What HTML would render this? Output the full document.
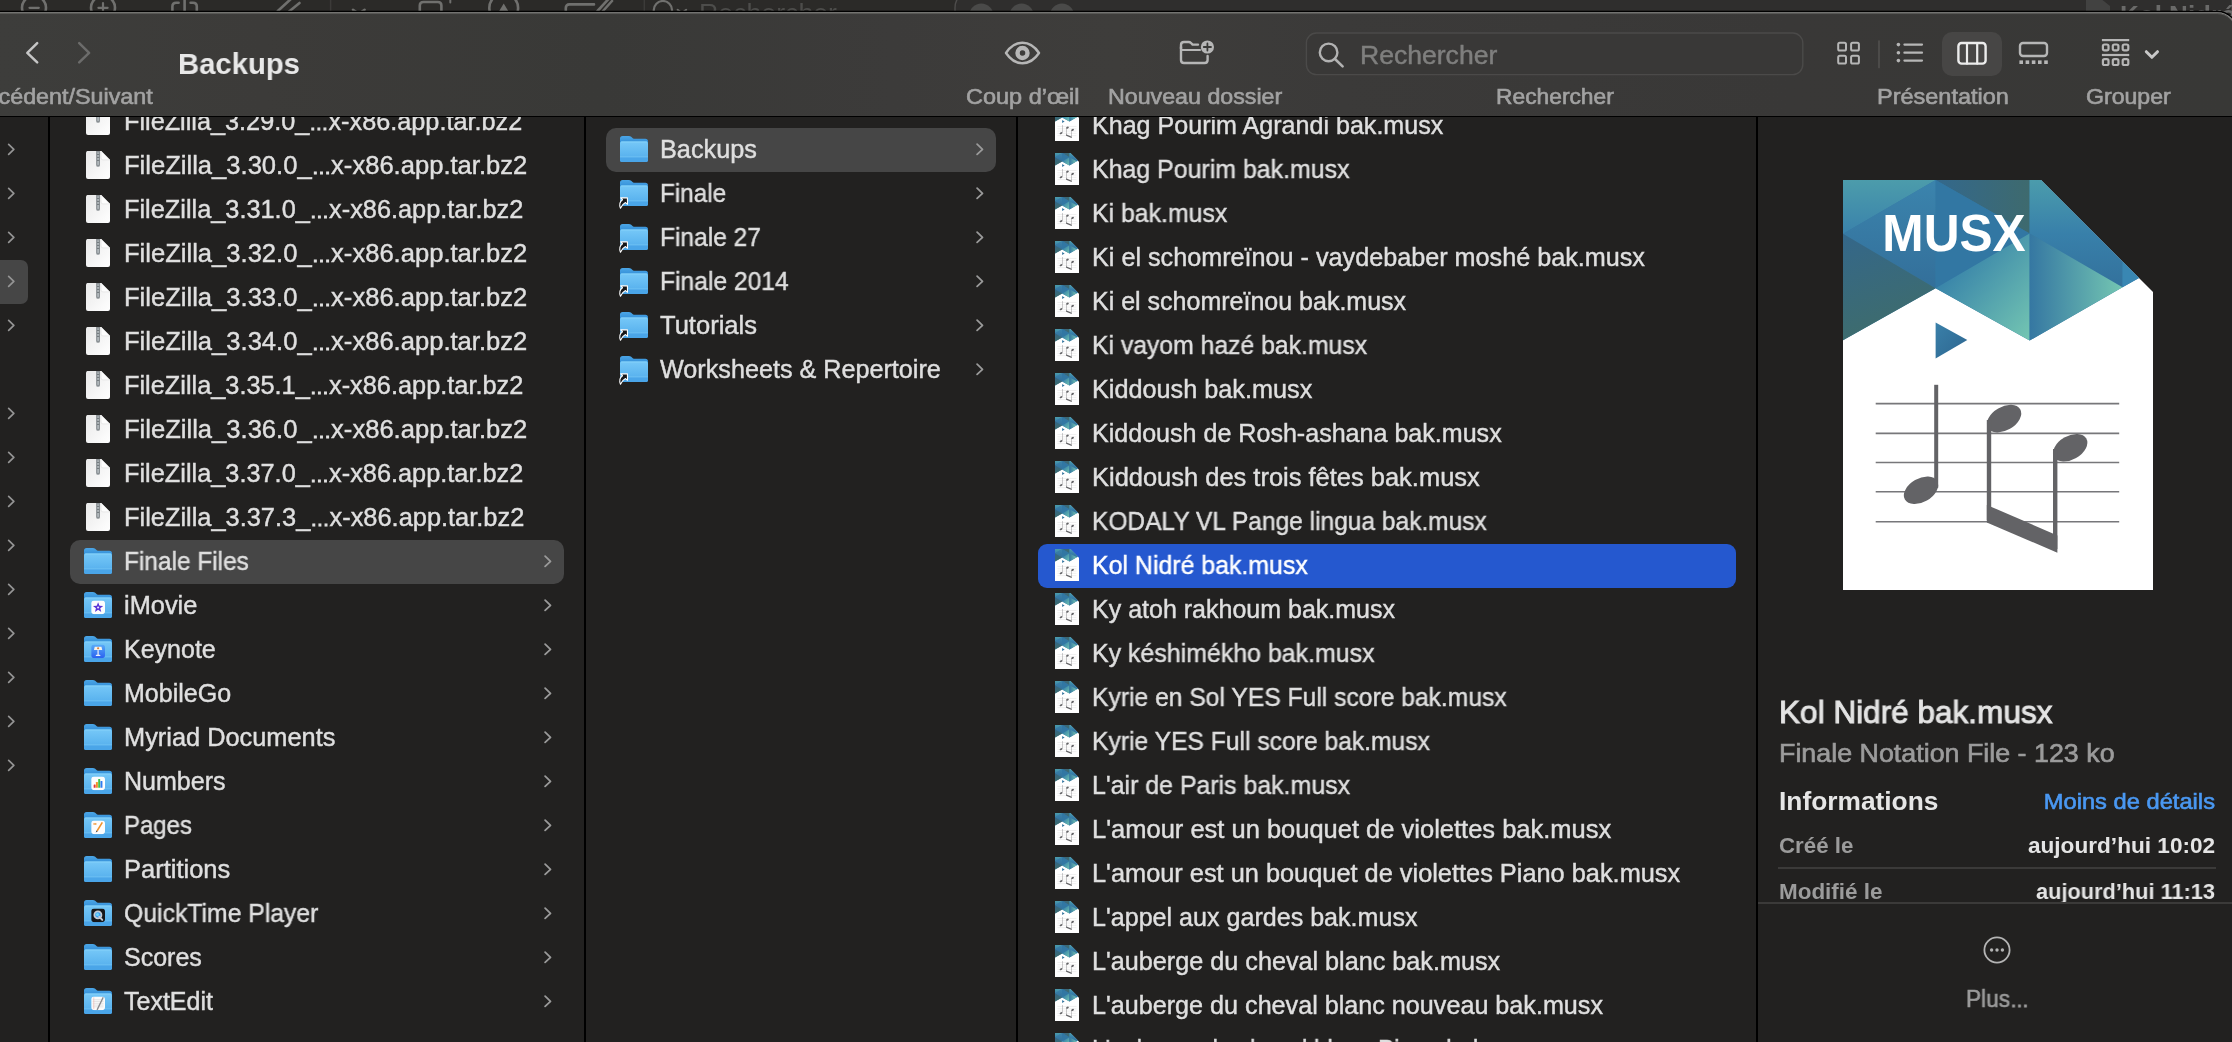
<!DOCTYPE html>
<html lang="fr">
<head>
<meta charset="utf-8">
<title>Backups</title>
<style>
html,body{margin:0;padding:0}
body{width:2232px;height:1042px;overflow:hidden;background:#222120;position:relative;font-family:"Liberation Sans",sans-serif}
.a{position:absolute;display:block}
.z{z-index:5}
.t.s{-webkit-text-stroke:.62px currentColor}
.t.s2{-webkit-text-stroke:.95px currentColor}
.t{-webkit-text-stroke:.45px currentColor;will-change:transform;position:absolute;white-space:nowrap;line-height:44px;height:44px}

.e{font-size:19px;-webkit-text-stroke:1.05px currentColor}
#strip{left:0;top:0;width:2232px;height:40px;background:#2b2a28;overflow:hidden;z-index:4}
#tb{left:0;top:14px;width:2232px;height:102px;background:#3a3a38}
</style>
</head>
<body>
<svg width="0" height="0" style="position:absolute">
<defs>
<linearGradient id="gfb" x1="0" y1="0" x2="0" y2="1"><stop offset="0" stop-color="#4ca6e6"/><stop offset="0.22" stop-color="#3792da"/><stop offset="1" stop-color="#3792da"/></linearGradient>
<linearGradient id="gff" x1="0" y1="0" x2="0" y2="1"><stop offset="0" stop-color="#76c8f7"/><stop offset="0.78" stop-color="#58b1ee"/><stop offset="1" stop-color="#54adec"/></linearGradient>
<linearGradient id="gzip" x1="0" y1="0" x2="1" y2="1"><stop offset="0" stop-color="#e9e9e9"/><stop offset="1" stop-color="#ffffff"/></linearGradient>
<linearGradient id="m1" x1="0" y1="0" x2="0" y2="1"><stop offset="0" stop-color="#4c9cab"/><stop offset="1" stop-color="#3a82ab"/></linearGradient>
<linearGradient id="m2" x1="0" y1="0" x2="0" y2="1"><stop offset="0" stop-color="#3b84ad"/><stop offset="1" stop-color="#336f9a"/></linearGradient>
<linearGradient id="m3" x1="0" y1="0" x2="0.3" y2="1"><stop offset="0" stop-color="#34678a"/><stop offset="1" stop-color="#3e6c6c"/></linearGradient>
<linearGradient id="m4" x1="0" y1="0" x2="1" y2="0"><stop offset="0" stop-color="#33688c"/><stop offset="1" stop-color="#3e6a6e"/></linearGradient>
<linearGradient id="m6" x1="0.2" y1="0.2" x2="1" y2="1"><stop offset="0" stop-color="#3580a9"/><stop offset="1" stop-color="#74c6b2"/></linearGradient>
<linearGradient id="m7" x1="0" y1="0" x2="0" y2="1"><stop offset="0" stop-color="#4b9cac"/><stop offset="0.5" stop-color="#3880aa"/><stop offset="1" stop-color="#33719c"/></linearGradient>
<linearGradient id="m8" x1="0" y1="0" x2="1" y2="0"><stop offset="0" stop-color="#3577a2"/><stop offset="1" stop-color="#74c6b2"/></linearGradient>
<linearGradient id="m9" x1="0" y1="0" x2="1" y2="1"><stop offset="0" stop-color="#3a80a9"/><stop offset="1" stop-color="#2d6690"/></linearGradient>

<linearGradient id="gkn" x1="0" y1="0" x2="0" y2="1"><stop offset="0" stop-color="#58acf8"/><stop offset="1" stop-color="#2a60f0"/></linearGradient>
<symbol id="folder" viewBox="0 0 28 27">
<path d="M0 3 Q0 0.3 2.6 0.3 L8.8 0.3 Q10.2 0.3 11.2 1.2 L12.8 2.6 Q13.6 3.2 15 3.2 L25.4 3.2 Q28 3.2 28 5.8 L28 24 Q28 26.5 25.4 26.5 L2.6 26.5 Q0 26.5 0 24 Z" fill="url(#gfb)"/>
<path d="M0 7.6 Q0 5.9 1.8 5.9 L26.2 5.9 Q28 5.9 28 7.6 L28 24 Q28 26.5 25.4 26.5 L2.6 26.5 Q0 26.5 0 24 Z" fill="url(#gff)"/>
<path d="M0 21.6 L28 21.6 L28 24 Q28 26.5 25.4 26.5 L2.6 26.5 Q0 26.5 0 24 Z" fill="#4aa5e8"/>
<rect x="0" y="20.8" width="28" height="0.9" fill="#70c2f4"/>
<rect x="0.8" y="5.9" width="26.4" height="0.9" rx="0.4" fill="#86d2fa"/>
</symbol>

<symbol id="zip" viewBox="0 0 24 28">
<path d="M2 0 L15 0 L24 9 L24 26 Q24 28 22 28 L2 28 Q0 28 0 26 L0 2 Q0 0 2 0 Z" fill="url(#gzip)"/>
<path d="M15 0 L24 9 L17 9 Q15 9 15 7 Z" fill="#fdfdfd" stroke="#dcdcdc" stroke-width="0.6"/>
<path d="M10.1 0 L14 0 L14 14 Q14 15.9 12 15.9 Q10.1 15.9 10.1 14 Z" fill="#8a9094"/>
<rect x="11.4" y="1.5" width="1.4" height="12.5" fill="#b9c0c4"/>
<rect x="11" y="3" width="2.2" height="1" fill="#6f767a"/><rect x="11" y="6" width="2.2" height="1" fill="#6f767a"/><rect x="11" y="9" width="2.2" height="1" fill="#6f767a"/>
</symbol>

<symbol id="musx" viewBox="0 0 310 410">
<path d="M0 0 L198 0 L310 112 L310 410 L0 410 Z" fill="#ffffff"/>
<path d="M0 0 L198 0 L296 98 L279.5 107.2 L186.6 160.6 L92.6 108.3 L0 160.3 Z" fill="#3579a3"/>
<path d="M0 0 L92.6 0 L0 53.7 Z" fill="url(#m1)"/>
<path d="M92.6 0 L92.6 108.3 L0 53.7 Z" fill="url(#m2)"/>
<path d="M0 53.7 L92.6 108.3 L0 160.3 Z" fill="url(#m3)"/>
<path d="M92.6 0 L186.6 0 L186.6 53.4 Z" fill="url(#m4)"/>
<path d="M92.6 0 L186.6 53.4 L92.6 108.3 Z" fill="#3277a3"/>
<path d="M92.6 108.3 L186.6 53.4 L186.6 160.6 Z" fill="url(#m6)"/>
<path d="M186.6 0 L198 0 L279.5 81.5 L279.5 107.2 L186.6 53.4 Z" fill="url(#m7)"/>
<path d="M186.6 53.4 L279.5 107.2 L186.6 160.6 Z" fill="url(#m8)"/>
<path d="M279.5 81.5 L296 98 L279.5 107.2 Z" fill="#3987b3"/>
<path d="M92.6 142.5 L124.3 160 L92.6 178.4 Z" fill="url(#m9)"/>
<g stroke="#77777a" stroke-width="1.6">
<line x1="32.7" y1="223.6" x2="276.2" y2="223.6"/><line x1="32.7" y1="253.4" x2="276.2" y2="253.4"/><line x1="32.7" y1="282.5" x2="276.2" y2="282.5"/><line x1="32.7" y1="311.7" x2="276.2" y2="311.7"/><line x1="32.7" y1="341.7" x2="276.2" y2="341.7"/>
</g>
<g fill="#636366">
<ellipse cx="78" cy="310.3" rx="18.6" ry="11.8" transform="rotate(-30 78 310.3)"/>
<rect x="91.2" y="204.8" width="4" height="103"/>
<ellipse cx="161.1" cy="238.6" rx="18.6" ry="11.8" transform="rotate(-30 161.1 238.6)"/>
<rect x="143.8" y="240" width="4.4" height="100"/>
<ellipse cx="227.2" cy="267.8" rx="18.6" ry="11.8" transform="rotate(-30 227.2 267.8)"/>
<rect x="210" y="269" width="4.4" height="100"/>
<path d="M143.8 324.9 L214.4 355.4 L214.4 372.8 L143.8 342.4 Z"/>
</g>
</symbol>

<symbol id="alias" viewBox="0 0 14 14">
<path d="M5.2 1.2 L12.4 1.2 L12.4 8.4 L10 6.4 Q5.4 7.4 3 12.6 L1.2 12 Q2.2 6 7.4 3.6 Z" fill="#111" stroke="#fff" stroke-width="1.3" stroke-linejoin="round"/>
</symbol>

<symbol id="b-imovie" viewBox="0 0 14 14"><rect width="14" height="14" rx="3.2" fill="#fdfdfd"/><path d="M7 1.8 L8.4 5.4 L12.2 5.6 L9.2 8 L10.2 11.8 L7 9.6 L3.8 11.8 L4.8 8 L1.8 5.6 L5.6 5.4 Z" fill="#5a34d6"/><circle cx="7" cy="7.2" r="1.1" fill="#e9e2ff"/></symbol>
<symbol id="b-keynote" viewBox="0 0 14 14"><rect width="14" height="14" rx="3.2" fill="url(#gkn)"/><path d="M3.6 2.4 L10.4 2.4 L11.2 5.8 L2.8 5.8 Z" fill="#f6f3ea"/><circle cx="7" cy="3.9" r="1.1" fill="#e0803a"/><rect x="6.3" y="5.8" width="1.4" height="5" fill="#dfe6f6"/><rect x="4.6" y="10.6" width="4.8" height="1.1" rx="0.5" fill="#eef2fa"/></symbol>
<symbol id="b-numbers" viewBox="0 0 14 14"><rect width="14" height="14" rx="3.2" fill="#fdfdfd"/><rect x="2.5" y="8.2" width="2" height="3.4" rx=".4" fill="#e0353d"/><rect x="4.8" y="5.8" width="2" height="5.8" rx=".4" fill="#f0932a"/><rect x="7.1" y="2.6" width="2" height="9" rx=".4" fill="#3fc14b"/><rect x="9.4" y="4.6" width="2" height="7" rx=".4" fill="#2f7cf0"/></symbol>
<symbol id="b-pages" viewBox="0 0 14 14"><rect width="14" height="14" rx="3.2" fill="#fdfdfd"/><path d="M5.3 10.2 L10.6 1.6 L12 2.4 L6.7 11 Z" fill="#f0912a"/><path d="M5.3 10.2 L6.7 11 L4.6 12.4 Z" fill="#3a3a3a"/><rect x="2.4" y="2.6" width="1.1" height="2" fill="#f0912a"/><rect x="4.1" y="2.6" width="1.1" height="2" fill="#f0912a"/></symbol>
<symbol id="b-qt" viewBox="0 0 14 14"><rect width="14" height="14" rx="3.2" fill="#16171a"/><circle cx="6.8" cy="6.6" r="3.6" fill="#3aa0f4" stroke="#c3cad4" stroke-width="1.8"/><circle cx="6.4" cy="6.2" r="1.6" fill="#6fd4fa"/><path d="M8.2 8.4 L11.2 11.6" stroke="#c3cad4" stroke-width="2" stroke-linecap="round"/></symbol>
<symbol id="b-textedit" viewBox="0 0 14 14"><rect width="14" height="14" rx="3.2" fill="#fbfbfb"/><g stroke="#d4d4d4" stroke-width="0.6"><line x1="1.5" y1="3.4" x2="12.5" y2="3.4"/><line x1="1.5" y1="5.2" x2="12.5" y2="5.2"/><line x1="1.5" y1="7" x2="12.5" y2="7"/><line x1="1.5" y1="8.8" x2="12.5" y2="8.8"/><line x1="1.5" y1="10.6" x2="12.5" y2="10.6"/></g><line x1="2.6" y1="1" x2="2.6" y2="13" stroke="#f0b0a8" stroke-width="0.6"/><path d="M5.4 13.4 L11.6 0.6 L12.8 1.2 L6.6 14 Z" fill="#8a8a8e"/></symbol>
</defs>
</svg>

<!-- background window strip -->
<div class="a" id="strip">
<svg class="a" style="left:0;top:0;will-change:transform" width="2232" height="40" viewBox="0 0 2232 40">
<g fill="none" stroke="#70706e" stroke-width="2.6" stroke-linecap="round">
<circle cx="34" cy="7.8" r="12"/><line x1="29.5" y1="7.8" x2="38.8" y2="7.8" stroke-width="2.2"/>
<circle cx="103" cy="7.8" r="12"/><line x1="98.4" y1="7.8" x2="107.6" y2="7.8" stroke-width="2.2"/><line x1="103" y1="3" x2="103" y2="12" stroke-width="2.2"/>
<path d="M172.4 12 L172.4 6.6 Q172.4 2.8 176.2 2.8 L178.6 2.8 M190.6 2.8 L193 2.8 Q196.8 2.8 196.8 6.6 L196.8 12"/><line x1="184.6" y1="-2" x2="184.6" y2="12"/>
<path d="M277.8 11 L292 -2 M299.5 3 L288.5 12"/>
<path d="M353 9.8 L358.8 13.8 L364.6 9.8"/>
<path d="M419.8 12 L419.8 5.6 Q419.8 2 423.4 2 L437.8 2 Q441.4 2 441.4 5.6 L441.4 12"/><line x1="450.3" y1="-2" x2="450.3" y2="2.6" stroke-width="2"/>
<circle cx="503.7" cy="8" r="14.4"/><path d="M498.6 12 L503.7 3.6 L508.8 12 Z" fill="#70706e" stroke="none"/>
<path d="M565.8 12 L565.8 8 Q565.8 4.4 569.4 4.4 L594 4.4"/><path d="M597.5 11 L608.5 -1 M603 11 L612 1"/>
<circle cx="662.9" cy="10.2" r="9.2" stroke-width="2.2"/>
<path d="M677.6 9.8 L681.9 13 L686.2 9.8" stroke-width="2"/>
</g>
<line x1="330.6" y1="0" x2="330.6" y2="11" stroke="#3c3b39" stroke-width="1.5"/>
<line x1="644.3" y1="0" x2="644.3" y2="11" stroke="#3c3b39" stroke-width="1.5"/>
<text x="699" y="22.3" font-family='"Liberation Sans", sans-serif' font-size="26" fill="#4d4d4b" textLength="138" lengthAdjust="spacingAndGlyphs">Rechercher</text>
<path d="M955 12 L955 8 Q955 -6 972 -10 L2232 -10 L2232 12 Z" fill="#2f2e2d" stroke="#4e4d4c" stroke-width="1.4"/>
<circle cx="981.3" cy="15.6" r="12" fill="#4a4a49"/><circle cx="1021.6" cy="15.6" r="12" fill="#4a4a49"/><circle cx="1062" cy="15.6" r="12" fill="#4a4a49"/>
<path d="M2086 12 L2086 0 L2100 -2 L2110 6 L2110 12 Z" fill="#424241"/>
<text x="2120" y="24" font-family='"Liberation Sans", sans-serif' font-weight="bold" font-size="26" fill="#6a6a69">Kol Nidré bak.musx</text>
</svg>
</div>

<!-- toolbar -->
<svg class="a z" style="left:0;top:0" width="2232" height="118" viewBox="0 0 2232 118">
<defs><linearGradient id="gtb" x1="0" y1="0" x2="1" y2="0"><stop offset="0" stop-color="#3d3d3b"/><stop offset="0.12" stop-color="#3c3b39"/><stop offset="0.27" stop-color="#393937"/><stop offset="0.4" stop-color="#3c3b3a"/><stop offset="0.5" stop-color="#3e3d3b"/><stop offset="0.6" stop-color="#3b3a39"/><stop offset="0.8" stop-color="#393837"/><stop offset="1" stop-color="#383836"/></linearGradient></defs>
<path d="M-5 12 L2217.5 12 A19.5 19.5 0 0 1 2237 31.5 L2237 116 L-5 116 Z" fill="url(#gtb)"/>
<path d="M-5 11.5 L2217.5 11.5 A20 20 0 0 1 2237.5 31.5" fill="none" stroke="#000" stroke-width="1.3"/>
<path d="M-5 12.75 L2217.5 12.75 A18.75 18.75 0 0 1 2236.25 31.5" fill="none" stroke="#8a8a88" stroke-width="1.1"/>
<path d="M-5 13.6 L2217.5 13.6 A17.9 17.9 0 0 1 2235.4 31.5" fill="none" stroke="#5a5a58" stroke-width="0.9"/>
</svg>
<div class="a z" style="left:0;top:116px;width:2232px;height:1.4px;background:#000"></div>
<svg class="a z" style="left:0;top:14px" width="2232" height="102" viewBox="0 14 2232 102">
<g fill="none" stroke-linecap="round" stroke-linejoin="round">
<path d="M37.2 43.2 L27.3 52.8 L37.2 62.4" stroke="#c6c6c6" stroke-width="2.5"/>
<path d="M79.2 43.2 L89.1 52.8 L79.2 62.4" stroke="#6c6c6b" stroke-width="2.5"/>
<!-- eye -->
<path d="M1006 53 C1010.5 46.2 1016 42.8 1022.5 42.8 C1029 42.8 1034.5 46.2 1039 53 C1034.5 59.8 1029 63.2 1022.5 63.2 C1016 63.2 1010.5 59.8 1006 53 Z" stroke="#b6b6b6" stroke-width="2.4"/>
<circle cx="1022.5" cy="53" r="5" stroke="#b6b6b6" stroke-width="4.4"/>
<!-- new folder -->
<path d="M1181 47 L1181 60 Q1181 63 1184 63 L1204.6 63 Q1207.6 63 1207.6 60 L1207.6 56" stroke="#b6b6b6" stroke-width="2.4"/>
<path d="M1181 48.4 L1181 45 Q1181 42 1184 42 L1188.6 42 Q1190 42 1191 43 L1192.6 44.6 L1198 44.6" stroke="#b6b6b6" stroke-width="2.4"/>
<path d="M1181.6 50 L1200 50" stroke="#b6b6b6" stroke-width="2.2"/>
<circle cx="1207.4" cy="47" r="6.6" fill="#b6b6b6" stroke="none"/>
<path d="M1203.8 47 L1211 47 M1207.4 43.4 L1207.4 50.6" stroke="#3a3a38" stroke-width="1.8"/>
<!-- search field -->
<rect x="1306.4" y="33" width="496.4" height="41.6" rx="10" fill="#393837" stroke="#4b4a49" stroke-width="1.4"/>
<circle cx="1328.6" cy="52.4" r="8.8" stroke="#b2b2b2" stroke-width="2.4"/>
<path d="M1335 59 L1342.6 66.4" stroke="#b2b2b2" stroke-width="2.6"/>
<!-- view: grid -->
<g stroke="#b6b6b6" stroke-width="2">
<rect x="1838.2" y="42.8" width="7.8" height="7.8" rx="1.6"/><rect x="1851.1" y="42.8" width="7.8" height="7.8" rx="1.6"/>
<rect x="1838.2" y="55.7" width="7.8" height="7.8" rx="1.6"/><rect x="1851.1" y="55.7" width="7.8" height="7.8" rx="1.6"/>
</g>
<line x1="1879" y1="41" x2="1879" y2="67.6" stroke="#52514f" stroke-width="1.6"/>
<!-- list -->
<g stroke="#b6b6b6" stroke-width="2.2">
<line x1="1904.4" y1="44.6" x2="1922" y2="44.6"/><line x1="1904.4" y1="52.7" x2="1922" y2="52.7"/><line x1="1904.4" y1="60.6" x2="1922" y2="60.6"/>
</g>
<circle cx="1898.4" cy="44.6" r="1.8" fill="#b6b6b6"/><circle cx="1898.4" cy="52.7" r="1.8" fill="#b6b6b6"/><circle cx="1898.4" cy="60.6" r="1.8" fill="#b6b6b6"/>
<!-- columns selected -->
<rect x="1942" y="32" width="60" height="44" rx="10" fill="#474645"/>
<rect x="1958.4" y="43" width="27.2" height="20.6" rx="3.2" stroke="#ececec" stroke-width="2.4"/>
<line x1="1967" y1="43" x2="1967" y2="63.6" stroke="#ececec" stroke-width="2.2"/><line x1="1977.2" y1="43" x2="1977.2" y2="63.6" stroke="#ececec" stroke-width="2.2"/>
<!-- gallery -->
<rect x="2020" y="43" width="27" height="13" rx="3" stroke="#b6b6b6" stroke-width="2.4"/>
<g fill="#b6b6b6" stroke="none"><rect x="2019.4" y="60.4" width="3.6" height="3.6"/><rect x="2025.6" y="60.4" width="3.6" height="3.6"/><rect x="2031.8" y="60.4" width="3.6" height="3.6"/><rect x="2038" y="60.4" width="3.6" height="3.6"/><rect x="2044.2" y="60.4" width="3.6" height="3.6"/></g>
<!-- group -->
<g stroke="#b6b6b6" stroke-width="2.2">
<line x1="2101.9" y1="40.1" x2="2129.2" y2="40.1" stroke-linecap="butt"/><line x1="2101.9" y1="55" x2="2129.2" y2="55" stroke-linecap="butt"/>
<rect x="2102.9" y="44.5" width="5.6" height="5.9" rx="1.6"/><rect x="2112.8" y="44.5" width="5.6" height="5.9" rx="1.6"/><rect x="2122.7" y="44.5" width="5.6" height="5.9" rx="1.6"/>
<rect x="2102.9" y="59.1" width="5.6" height="5.9" rx="1.6"/><rect x="2112.8" y="59.1" width="5.6" height="5.9" rx="1.6"/><rect x="2122.7" y="59.1" width="5.6" height="5.9" rx="1.6"/>
</g>
<path d="M2146.3 51.7 L2151.9 57.3 L2157.5 51.7" stroke="#c8c8c8" stroke-width="3"/>
</g>
</svg>
<!--TBTEXT-->
<div class="t" id="tb_title" style="left:177.8px;transform-origin:0 50%;transform:scaleX(0.9756);top:41.9px;font-size:30px;color:#e8e8e8;font-weight:bold;z-index:6;-webkit-text-stroke:0;">Backups</div>
<div class="t s" id="tb_prev" style="right:2079px;transform-origin:100% 50%;transform:scaleX(1.0600);top:75.0px;font-size:22px;color:#a2a2a2;font-weight:normal;z-index:6;">Précédent/Suivant</div>
<div class="t s" id="tb_coup" style="left:965.6px;transform-origin:0 50%;transform:scaleX(1.0673);top:75.0px;font-size:22px;color:#a2a2a2;font-weight:normal;z-index:6;">Coup d’œil</div>
<div class="t s" id="tb_nouv" style="left:1107.6px;transform-origin:0 50%;transform:scaleX(1.0552);top:75.0px;font-size:22px;color:#a2a2a2;font-weight:normal;z-index:6;">Nouveau dossier</div>
<div class="t s" id="tb_rech" style="left:1495.7px;transform-origin:0 50%;transform:scaleX(1.0360);top:75.0px;font-size:22px;color:#a2a2a2;font-weight:normal;z-index:6;">Rechercher</div>
<div class="t s" id="tb_pres" style="left:1877.1px;transform-origin:0 50%;transform:scaleX(1.0670);top:75.0px;font-size:22px;color:#a2a2a2;font-weight:normal;z-index:6;">Présentation</div>
<div class="t s" id="tb_grou" style="left:2086.4px;transform-origin:0 50%;transform:scaleX(1.0503);top:75.0px;font-size:22px;color:#a2a2a2;font-weight:normal;z-index:6;">Grouper</div>
<div class="t" id="tb_ph" style="left:1360.2px;transform-origin:0 50%;transform:scaleX(1.0623);top:32.6px;font-size:25px;color:#7f7f7e;font-weight:normal;z-index:6;">Rechercher</div>
<div class="a" style="left:48px;top:116px;width:2px;height:930px;background:#000"></div>
<div class="a" style="left:584px;top:116px;width:2px;height:930px;background:#000"></div>
<div class="a" style="left:1016px;top:116px;width:2px;height:930px;background:#000"></div>
<div class="a" style="left:1756px;top:116px;width:2px;height:930px;background:#000"></div>
<div class="a" style="left:-10px;top:260px;width:38px;height:44px;border-radius:7px;background:#464646"></div>
<div class="a" style="left:70px;top:540px;width:494px;height:44px;border-radius:10px;background:#464646"></div>
<div class="t" id="c1_0" style="left:124.0px;transform-origin:0 50%;transform:scaleX(1.0101);top:99px;font-size:25px;color:#dfdfdf;font-weight:normal;">FileZilla_3.29.0_<span class=e>…</span>x-x86.app.tar.bz2</div>
<div class="t" id="c1_1" style="left:124.0px;transform-origin:0 50%;transform:scaleX(1.0229);top:143px;font-size:25px;color:#dfdfdf;font-weight:normal;">FileZilla_3.30.0_<span class=e>…</span>x-x86.app.tar.bz2</div>
<div class="t" id="c1_2" style="left:124.0px;transform-origin:0 50%;transform:scaleX(1.0129);top:187px;font-size:25px;color:#dfdfdf;font-weight:normal;">FileZilla_3.31.0_<span class=e>…</span>x-x86.app.tar.bz2</div>
<div class="t" id="c1_3" style="left:124.0px;transform-origin:0 50%;transform:scaleX(1.0229);top:231px;font-size:25px;color:#dfdfdf;font-weight:normal;">FileZilla_3.32.0_<span class=e>…</span>x-x86.app.tar.bz2</div>
<div class="t" id="c1_4" style="left:124.0px;transform-origin:0 50%;transform:scaleX(1.0229);top:275px;font-size:25px;color:#dfdfdf;font-weight:normal;">FileZilla_3.33.0_<span class=e>…</span>x-x86.app.tar.bz2</div>
<div class="t" id="c1_5" style="left:124.0px;transform-origin:0 50%;transform:scaleX(1.0229);top:319px;font-size:25px;color:#dfdfdf;font-weight:normal;">FileZilla_3.34.0_<span class=e>…</span>x-x86.app.tar.bz2</div>
<div class="t" id="c1_6" style="left:124.0px;transform-origin:0 50%;transform:scaleX(1.0128);top:363px;font-size:25px;color:#dfdfdf;font-weight:normal;">FileZilla_3.35.1_<span class=e>…</span>x-x86.app.tar.bz2</div>
<div class="t" id="c1_7" style="left:124.0px;transform-origin:0 50%;transform:scaleX(1.0229);top:407px;font-size:25px;color:#dfdfdf;font-weight:normal;">FileZilla_3.36.0_<span class=e>…</span>x-x86.app.tar.bz2</div>
<div class="t" id="c1_8" style="left:124.0px;transform-origin:0 50%;transform:scaleX(1.0129);top:451px;font-size:25px;color:#dfdfdf;font-weight:normal;">FileZilla_3.37.0_<span class=e>…</span>x-x86.app.tar.bz2</div>
<div class="t" id="c1_9" style="left:124.0px;transform-origin:0 50%;transform:scaleX(1.0153);top:495px;font-size:25px;color:#dfdfdf;font-weight:normal;">FileZilla_3.37.3_<span class=e>…</span>x-x86.app.tar.bz2</div>
<div class="t" id="c1_10" style="left:124.0px;transform-origin:0 50%;transform:scaleX(0.9767);top:539px;font-size:25px;color:#dfdfdf;font-weight:normal;">Finale Files</div>
<div class="t" id="c1_11" style="left:124.0px;transform-origin:0 50%;transform:scaleX(1.0150);top:583px;font-size:25px;color:#dfdfdf;font-weight:normal;">iMovie</div>
<div class="t" id="c1_12" style="left:124.0px;transform-origin:0 50%;transform:scaleX(1.0001);top:627px;font-size:25px;color:#dfdfdf;font-weight:normal;">Keynote</div>
<div class="t" id="c1_13" style="left:124.0px;transform-origin:0 50%;transform:scaleX(1.0005);top:671px;font-size:25px;color:#dfdfdf;font-weight:normal;">MobileGo</div>
<div class="t" id="c1_14" style="left:124.0px;transform-origin:0 50%;transform:scaleX(1.0146);top:715px;font-size:25px;color:#dfdfdf;font-weight:normal;">Myriad Documents</div>
<div class="t" id="c1_15" style="left:124.0px;transform-origin:0 50%;transform:scaleX(1.0005);top:759px;font-size:25px;color:#dfdfdf;font-weight:normal;">Numbers</div>
<div class="t" id="c1_16" style="left:124.0px;transform-origin:0 50%;transform:scaleX(0.9571);top:803px;font-size:25px;color:#dfdfdf;font-weight:normal;">Pages</div>
<div class="t" id="c1_17" style="left:124.0px;transform-origin:0 50%;transform:scaleX(1.0195);top:847px;font-size:25px;color:#dfdfdf;font-weight:normal;">Partitions</div>
<div class="t" id="c1_18" style="left:124.0px;transform-origin:0 50%;transform:scaleX(0.9901);top:891px;font-size:25px;color:#dfdfdf;font-weight:normal;">QuickTime Player</div>
<div class="t" id="c1_19" style="left:124.0px;transform-origin:0 50%;transform:scaleX(1.0006);top:935px;font-size:25px;color:#dfdfdf;font-weight:normal;">Scores</div>
<div class="t" id="c1_20" style="left:124.0px;transform-origin:0 50%;transform:scaleX(1.0005);top:979px;font-size:25px;color:#dfdfdf;font-weight:normal;">TextEdit</div>
<div class="a" style="left:606px;top:128px;width:390px;height:44px;border-radius:10px;background:#464646"></div>
<div class="t" id="c2_0" style="left:659.9px;transform-origin:0 50%;transform:scaleX(1.0109);top:127px;font-size:25px;color:#dfdfdf;font-weight:normal;">Backups</div>
<div class="t" id="c2_1" style="left:659.9px;transform-origin:0 50%;transform:scaleX(0.9705);top:171px;font-size:25px;color:#dfdfdf;font-weight:normal;">Finale</div>
<div class="t" id="c2_2" style="left:659.9px;transform-origin:0 50%;transform:scaleX(0.9806);top:215px;font-size:25px;color:#dfdfdf;font-weight:normal;">Finale 27</div>
<div class="t" id="c2_3" style="left:659.9px;transform-origin:0 50%;transform:scaleX(0.9849);top:259px;font-size:25px;color:#dfdfdf;font-weight:normal;">Finale 2014</div>
<div class="t" id="c2_4" style="left:659.9px;transform-origin:0 50%;transform:scaleX(1.0212);top:303px;font-size:25px;color:#dfdfdf;font-weight:normal;">Tutorials</div>
<div class="t" id="c2_5" style="left:659.9px;transform-origin:0 50%;transform:scaleX(1.0073);top:347px;font-size:25px;color:#dfdfdf;font-weight:normal;">Worksheets &amp; Repertoire</div>
<div class="a" style="left:1038px;top:544px;width:698px;height:44px;border-radius:9px;background:#2558cf"></div>
<div class="t" id="c3_0" style="left:1092.0px;transform-origin:0 50%;transform:scaleX(1.0031);top:103px;font-size:25px;color:#dfdfdf;font-weight:normal;">Khag Pourim Agrandi bak.musx</div>
<div class="t" id="c3_1" style="left:1092.0px;transform-origin:0 50%;transform:scaleX(0.9964);top:147px;font-size:25px;color:#dfdfdf;font-weight:normal;">Khag Pourim bak.musx</div>
<div class="t" id="c3_2" style="left:1092.0px;transform-origin:0 50%;transform:scaleX(0.9929);top:191px;font-size:25px;color:#dfdfdf;font-weight:normal;">Ki bak.musx</div>
<div class="t" id="c3_3" style="left:1092.0px;transform-origin:0 50%;transform:scaleX(1.0074);top:235px;font-size:25px;color:#dfdfdf;font-weight:normal;">Ki el schomreïnou - vaydebaber moshé bak.musx</div>
<div class="t" id="c3_4" style="left:1092.0px;transform-origin:0 50%;transform:scaleX(1.0002);top:279px;font-size:25px;color:#dfdfdf;font-weight:normal;">Ki el schomreïnou bak.musx</div>
<div class="t" id="c3_5" style="left:1092.0px;transform-origin:0 50%;transform:scaleX(0.9895);top:323px;font-size:25px;color:#dfdfdf;font-weight:normal;">Ki vayom hazé bak.musx</div>
<div class="t" id="c3_6" style="left:1092.0px;transform-origin:0 50%;transform:scaleX(1.0095);top:367px;font-size:25px;color:#dfdfdf;font-weight:normal;">Kiddoush bak.musx</div>
<div class="t" id="c3_7" style="left:1092.0px;transform-origin:0 50%;transform:scaleX(1.0027);top:411px;font-size:25px;color:#dfdfdf;font-weight:normal;">Kiddoush de Rosh-ashana bak.musx</div>
<div class="t" id="c3_8" style="left:1092.0px;transform-origin:0 50%;transform:scaleX(1.0184);top:455px;font-size:25px;color:#dfdfdf;font-weight:normal;">Kiddoush des trois fêtes bak.musx</div>
<div class="t" id="c3_9" style="left:1092.0px;transform-origin:0 50%;transform:scaleX(0.9806);top:499px;font-size:25px;color:#dfdfdf;font-weight:normal;">KODALY VL Pange lingua bak.musx</div>
<div class="t" id="c3_10" style="left:1092.0px;transform-origin:0 50%;transform:scaleX(0.9956);top:543px;font-size:25px;color:#ffffff;font-weight:normal;">Kol Nidré bak.musx</div>
<div class="t" id="c3_11" style="left:1092.0px;transform-origin:0 50%;transform:scaleX(1.0002);top:587px;font-size:25px;color:#dfdfdf;font-weight:normal;">Ky atoh rakhoum bak.musx</div>
<div class="t" id="c3_12" style="left:1092.0px;transform-origin:0 50%;transform:scaleX(0.9968);top:631px;font-size:25px;color:#dfdfdf;font-weight:normal;">Ky késhimékho bak.musx</div>
<div class="t" id="c3_13" style="left:1092.0px;transform-origin:0 50%;transform:scaleX(0.9861);top:675px;font-size:25px;color:#dfdfdf;font-weight:normal;">Kyrie en Sol YES Full score bak.musx</div>
<div class="t" id="c3_14" style="left:1092.0px;transform-origin:0 50%;transform:scaleX(0.9858);top:719px;font-size:25px;color:#dfdfdf;font-weight:normal;">Kyrie YES Full score bak.musx</div>
<div class="t" id="c3_15" style="left:1092.0px;transform-origin:0 50%;transform:scaleX(0.9964);top:763px;font-size:25px;color:#dfdfdf;font-weight:normal;">L&#x27;air de Paris bak.musx</div>
<div class="t" id="c3_16" style="left:1092.0px;transform-origin:0 50%;transform:scaleX(1.0196);top:807px;font-size:25px;color:#dfdfdf;font-weight:normal;">L&#x27;amour est un bouquet de violettes bak.musx</div>
<div class="t" id="c3_17" style="left:1092.0px;transform-origin:0 50%;transform:scaleX(1.0139);top:851px;font-size:25px;color:#dfdfdf;font-weight:normal;">L&#x27;amour est un bouquet de violettes Piano bak.musx</div>
<div class="t" id="c3_18" style="left:1092.0px;transform-origin:0 50%;transform:scaleX(1.0033);top:895px;font-size:25px;color:#dfdfdf;font-weight:normal;">L&#x27;appel aux gardes bak.musx</div>
<div class="t" id="c3_19" style="left:1092.0px;transform-origin:0 50%;transform:scaleX(1.0076);top:939px;font-size:25px;color:#dfdfdf;font-weight:normal;">L&#x27;auberge du cheval blanc bak.musx</div>
<div class="t" id="c3_20" style="left:1092.0px;transform-origin:0 50%;transform:scaleX(1.0061);top:983px;font-size:25px;color:#dfdfdf;font-weight:normal;">L&#x27;auberge du cheval blanc nouveau bak.musx</div>
<div class="t" id="c3_21" style="left:1092.0px;transform-origin:0 50%;transform:scaleX(0.9600);top:1027px;font-size:25px;color:#dfdfdf;font-weight:normal;">L&#x27;auberge du cheval blanc Piano bak.musx</div>
<svg class="a" style="left:0;top:0" width="2232" height="1042" viewBox="0 0 2232 1042"><path d="M8.65 144.30 L13.85 149.30 L8.65 154.30" fill="none" stroke="#949494" stroke-width="1.7" stroke-linecap="round" stroke-linejoin="round"/>
<path d="M8.65 188.30 L13.85 193.30 L8.65 198.30" fill="none" stroke="#949494" stroke-width="1.7" stroke-linecap="round" stroke-linejoin="round"/>
<path d="M8.65 232.30 L13.85 237.30 L8.65 242.30" fill="none" stroke="#949494" stroke-width="1.7" stroke-linecap="round" stroke-linejoin="round"/>
<path d="M8.65 276.30 L13.85 281.30 L8.65 286.30" fill="none" stroke="#949494" stroke-width="1.7" stroke-linecap="round" stroke-linejoin="round"/>
<path d="M8.65 320.30 L13.85 325.30 L8.65 330.30" fill="none" stroke="#949494" stroke-width="1.7" stroke-linecap="round" stroke-linejoin="round"/>
<path d="M8.65 408.30 L13.85 413.30 L8.65 418.30" fill="none" stroke="#949494" stroke-width="1.7" stroke-linecap="round" stroke-linejoin="round"/>
<path d="M8.65 452.30 L13.85 457.30 L8.65 462.30" fill="none" stroke="#949494" stroke-width="1.7" stroke-linecap="round" stroke-linejoin="round"/>
<path d="M8.65 496.30 L13.85 501.30 L8.65 506.30" fill="none" stroke="#949494" stroke-width="1.7" stroke-linecap="round" stroke-linejoin="round"/>
<path d="M8.65 540.30 L13.85 545.30 L8.65 550.30" fill="none" stroke="#949494" stroke-width="1.7" stroke-linecap="round" stroke-linejoin="round"/>
<path d="M8.65 584.30 L13.85 589.30 L8.65 594.30" fill="none" stroke="#949494" stroke-width="1.7" stroke-linecap="round" stroke-linejoin="round"/>
<path d="M8.65 628.30 L13.85 633.30 L8.65 638.30" fill="none" stroke="#949494" stroke-width="1.7" stroke-linecap="round" stroke-linejoin="round"/>
<path d="M8.65 672.30 L13.85 677.30 L8.65 682.30" fill="none" stroke="#949494" stroke-width="1.7" stroke-linecap="round" stroke-linejoin="round"/>
<path d="M8.65 716.30 L13.85 721.30 L8.65 726.30" fill="none" stroke="#949494" stroke-width="1.7" stroke-linecap="round" stroke-linejoin="round"/>
<path d="M8.65 760.30 L13.85 765.30 L8.65 770.30" fill="none" stroke="#949494" stroke-width="1.7" stroke-linecap="round" stroke-linejoin="round"/>
<use href="#zip" x="86" y="106.90" width="24" height="28"/>
<use href="#zip" x="86" y="150.90" width="24" height="28"/>
<use href="#zip" x="86" y="194.90" width="24" height="28"/>
<use href="#zip" x="86" y="238.90" width="24" height="28"/>
<use href="#zip" x="86" y="282.90" width="24" height="28"/>
<use href="#zip" x="86" y="326.90" width="24" height="28"/>
<use href="#zip" x="86" y="370.90" width="24" height="28"/>
<use href="#zip" x="86" y="414.90" width="24" height="28"/>
<use href="#zip" x="86" y="458.90" width="24" height="28"/>
<use href="#zip" x="86" y="502.90" width="24" height="28"/>
<use href="#folder" x="84" y="547.60" width="28" height="27"/>
<path d="M545.10 556.20 L550.50 561.30 L545.10 566.40" fill="none" stroke="#9a9a9a" stroke-width="1.8" stroke-linecap="round" stroke-linejoin="round"/>
<use href="#folder" x="84" y="591.60" width="28" height="27"/>
<use href="#b-imovie" x="91.20" y="600.40" width="13.8" height="13.8"/>
<path d="M545.10 600.20 L550.50 605.30 L545.10 610.40" fill="none" stroke="#9a9a9a" stroke-width="1.8" stroke-linecap="round" stroke-linejoin="round"/>
<use href="#folder" x="84" y="635.60" width="28" height="27"/>
<use href="#b-keynote" x="91.20" y="644.40" width="13.8" height="13.8"/>
<path d="M545.10 644.20 L550.50 649.30 L545.10 654.40" fill="none" stroke="#9a9a9a" stroke-width="1.8" stroke-linecap="round" stroke-linejoin="round"/>
<use href="#folder" x="84" y="679.60" width="28" height="27"/>
<path d="M545.10 688.20 L550.50 693.30 L545.10 698.40" fill="none" stroke="#9a9a9a" stroke-width="1.8" stroke-linecap="round" stroke-linejoin="round"/>
<use href="#folder" x="84" y="723.60" width="28" height="27"/>
<path d="M545.10 732.20 L550.50 737.30 L545.10 742.40" fill="none" stroke="#9a9a9a" stroke-width="1.8" stroke-linecap="round" stroke-linejoin="round"/>
<use href="#folder" x="84" y="767.60" width="28" height="27"/>
<use href="#b-numbers" x="91.20" y="776.40" width="13.8" height="13.8"/>
<path d="M545.10 776.20 L550.50 781.30 L545.10 786.40" fill="none" stroke="#9a9a9a" stroke-width="1.8" stroke-linecap="round" stroke-linejoin="round"/>
<use href="#folder" x="84" y="811.60" width="28" height="27"/>
<use href="#b-pages" x="91.20" y="820.40" width="13.8" height="13.8"/>
<path d="M545.10 820.20 L550.50 825.30 L545.10 830.40" fill="none" stroke="#9a9a9a" stroke-width="1.8" stroke-linecap="round" stroke-linejoin="round"/>
<use href="#folder" x="84" y="855.60" width="28" height="27"/>
<path d="M545.10 864.20 L550.50 869.30 L545.10 874.40" fill="none" stroke="#9a9a9a" stroke-width="1.8" stroke-linecap="round" stroke-linejoin="round"/>
<use href="#folder" x="84" y="899.60" width="28" height="27"/>
<use href="#b-qt" x="91.20" y="908.40" width="13.8" height="13.8"/>
<path d="M545.10 908.20 L550.50 913.30 L545.10 918.40" fill="none" stroke="#9a9a9a" stroke-width="1.8" stroke-linecap="round" stroke-linejoin="round"/>
<use href="#folder" x="84" y="943.60" width="28" height="27"/>
<path d="M545.10 952.20 L550.50 957.30 L545.10 962.40" fill="none" stroke="#9a9a9a" stroke-width="1.8" stroke-linecap="round" stroke-linejoin="round"/>
<use href="#folder" x="84" y="987.60" width="28" height="27"/>
<use href="#b-textedit" x="91.20" y="996.40" width="13.8" height="13.8"/>
<path d="M545.10 996.20 L550.50 1001.30 L545.10 1006.40" fill="none" stroke="#9a9a9a" stroke-width="1.8" stroke-linecap="round" stroke-linejoin="round"/>
<use href="#folder" x="620" y="135.60" width="28" height="27"/>
<path d="M977.10 144.20 L982.50 149.30 L977.10 154.40" fill="none" stroke="#9a9a9a" stroke-width="1.8" stroke-linecap="round" stroke-linejoin="round"/>
<use href="#folder" x="620" y="179.60" width="28" height="27"/>
<path transform="translate(618.90 197.00)" d="M1.8 0.9 L8.5 0.7 L8.6 7.3 L6.6 5.6 Q3.4 7.2 1.6 11.2 Q-0.6 5.6 3.6 2.7 Z" fill="#16171a" stroke="#fff" stroke-width="1.1" stroke-linejoin="round"/>
<path d="M977.10 188.20 L982.50 193.30 L977.10 198.40" fill="none" stroke="#9a9a9a" stroke-width="1.8" stroke-linecap="round" stroke-linejoin="round"/>
<use href="#folder" x="620" y="223.60" width="28" height="27"/>
<path transform="translate(618.90 241.00)" d="M1.8 0.9 L8.5 0.7 L8.6 7.3 L6.6 5.6 Q3.4 7.2 1.6 11.2 Q-0.6 5.6 3.6 2.7 Z" fill="#16171a" stroke="#fff" stroke-width="1.1" stroke-linejoin="round"/>
<path d="M977.10 232.20 L982.50 237.30 L977.10 242.40" fill="none" stroke="#9a9a9a" stroke-width="1.8" stroke-linecap="round" stroke-linejoin="round"/>
<use href="#folder" x="620" y="267.60" width="28" height="27"/>
<path transform="translate(618.90 285.00)" d="M1.8 0.9 L8.5 0.7 L8.6 7.3 L6.6 5.6 Q3.4 7.2 1.6 11.2 Q-0.6 5.6 3.6 2.7 Z" fill="#16171a" stroke="#fff" stroke-width="1.1" stroke-linejoin="round"/>
<path d="M977.10 276.20 L982.50 281.30 L977.10 286.40" fill="none" stroke="#9a9a9a" stroke-width="1.8" stroke-linecap="round" stroke-linejoin="round"/>
<use href="#folder" x="620" y="311.60" width="28" height="27"/>
<path transform="translate(618.90 329.00)" d="M1.8 0.9 L8.5 0.7 L8.6 7.3 L6.6 5.6 Q3.4 7.2 1.6 11.2 Q-0.6 5.6 3.6 2.7 Z" fill="#16171a" stroke="#fff" stroke-width="1.1" stroke-linejoin="round"/>
<path d="M977.10 320.20 L982.50 325.30 L977.10 330.40" fill="none" stroke="#9a9a9a" stroke-width="1.8" stroke-linecap="round" stroke-linejoin="round"/>
<use href="#folder" x="620" y="355.60" width="28" height="27"/>
<path transform="translate(618.90 373.00)" d="M1.8 0.9 L8.5 0.7 L8.6 7.3 L6.6 5.6 Q3.4 7.2 1.6 11.2 Q-0.6 5.6 3.6 2.7 Z" fill="#16171a" stroke="#fff" stroke-width="1.1" stroke-linejoin="round"/>
<path d="M977.10 364.20 L982.50 369.30 L977.10 374.40" fill="none" stroke="#9a9a9a" stroke-width="1.8" stroke-linecap="round" stroke-linejoin="round"/>
<use href="#musx" x="1054.9" y="109" width="24.2" height="32"/>
<use href="#musx" x="1054.9" y="153" width="24.2" height="32"/>
<use href="#musx" x="1054.9" y="197" width="24.2" height="32"/>
<use href="#musx" x="1054.9" y="241" width="24.2" height="32"/>
<use href="#musx" x="1054.9" y="285" width="24.2" height="32"/>
<use href="#musx" x="1054.9" y="329" width="24.2" height="32"/>
<use href="#musx" x="1054.9" y="373" width="24.2" height="32"/>
<use href="#musx" x="1054.9" y="417" width="24.2" height="32"/>
<use href="#musx" x="1054.9" y="461" width="24.2" height="32"/>
<use href="#musx" x="1054.9" y="505" width="24.2" height="32"/>
<use href="#musx" x="1054.9" y="549" width="24.2" height="32"/>
<use href="#musx" x="1054.9" y="593" width="24.2" height="32"/>
<use href="#musx" x="1054.9" y="637" width="24.2" height="32"/>
<use href="#musx" x="1054.9" y="681" width="24.2" height="32"/>
<use href="#musx" x="1054.9" y="725" width="24.2" height="32"/>
<use href="#musx" x="1054.9" y="769" width="24.2" height="32"/>
<use href="#musx" x="1054.9" y="813" width="24.2" height="32"/>
<use href="#musx" x="1054.9" y="857" width="24.2" height="32"/>
<use href="#musx" x="1054.9" y="901" width="24.2" height="32"/>
<use href="#musx" x="1054.9" y="945" width="24.2" height="32"/>
<use href="#musx" x="1054.9" y="989" width="24.2" height="32"/>
<use href="#musx" x="1054.9" y="1033" width="24.2" height="32"/></svg>
<svg class="a" style="left:1843px;top:180px" width="310" height="410" viewBox="0 0 310 410"><use href="#musx"/><text x="111" y="71.4" text-anchor="middle" font-family='"Liberation Sans", sans-serif' font-weight="bold" font-size="52" fill="#fff" textLength="143.4" lengthAdjust="spacingAndGlyphs">MUSX</text></svg>
<div class="t s2" id="pv_title" style="left:1778.6px;transform-origin:0 50%;transform:scaleX(0.9855);top:689.7px;font-size:32px;color:#e4e4e4;font-weight:normal;">Kol Nidré bak.musx</div>
<div class="t s" id="pv_sub" style="left:1778.6px;transform-origin:0 50%;transform:scaleX(1.0733);top:730.7px;font-size:25px;color:#9b9b9b;font-weight:normal;">Finale Notation File - 123 ko</div>
<div class="t" id="pv_info" style="left:1778.6px;transform-origin:0 50%;transform:scaleX(1.0530);top:778.7px;font-size:25px;color:#e6e6e6;font-weight:bold;-webkit-text-stroke:0;">Informations</div>
<div class="t s" id="pv_moins" style="right:16.800000000000182px;transform-origin:100% 50%;transform:scaleX(1.0770);top:780.2px;font-size:22px;color:#4a98f2;font-weight:normal;">Moins de détails</div>
<div class="t" id="pv_cree" style="left:1778.6px;transform-origin:0 50%;transform:scaleX(1.0139);top:823.7px;font-size:22px;color:#9b9b9b;font-weight:bold;-webkit-text-stroke:0;">Créé le</div>
<div class="t" id="pv_cree_v" style="right:16.800000000000182px;transform-origin:100% 50%;transform:scaleX(1.0277);top:823.7px;font-size:22px;color:#e4e4e4;font-weight:bold;-webkit-text-stroke:0;">aujourd’hui 10:02</div>
<div class="a" style="left:1778px;top:867px;width:438px;height:1.5px;background:#3b3a39"></div>
<div class="t" id="pv_mod" style="left:1778.6px;transform-origin:0 50%;transform:scaleX(1.0202);top:869.7px;font-size:22px;color:#9b9b9b;font-weight:bold;-webkit-text-stroke:0;">Modifié le</div>
<div class="t" id="pv_mod_v" style="right:16.800000000000182px;transform-origin:100% 50%;transform:scaleX(0.9890);top:869.7px;font-size:22px;color:#e4e4e4;font-weight:bold;-webkit-text-stroke:0;">aujourd’hui 11:13</div>
<div class="a" style="left:1758px;top:902px;width:474px;height:140px;background:#222120;border-top:2px solid #3b3a39"></div>
<svg class="a" style="left:1982px;top:935px" width="30" height="30"><circle cx="15" cy="15" r="12.6" fill="none" stroke="#b4b4b4" stroke-width="1.8"/><circle cx="9.6" cy="15" r="1.7" fill="#b4b4b4"/><circle cx="15" cy="15" r="1.7" fill="#b4b4b4"/><circle cx="20.4" cy="15" r="1.7" fill="#b4b4b4"/></svg>
<div class="t s" id="pv_plus" style="left:1966px;transform-origin:0 50%;transform:scaleX(0.9853);top:976.7px;font-size:23px;color:#9b9b9b;font-weight:normal;">Plus<span class=e>…</span></div>
</body>
</html>
